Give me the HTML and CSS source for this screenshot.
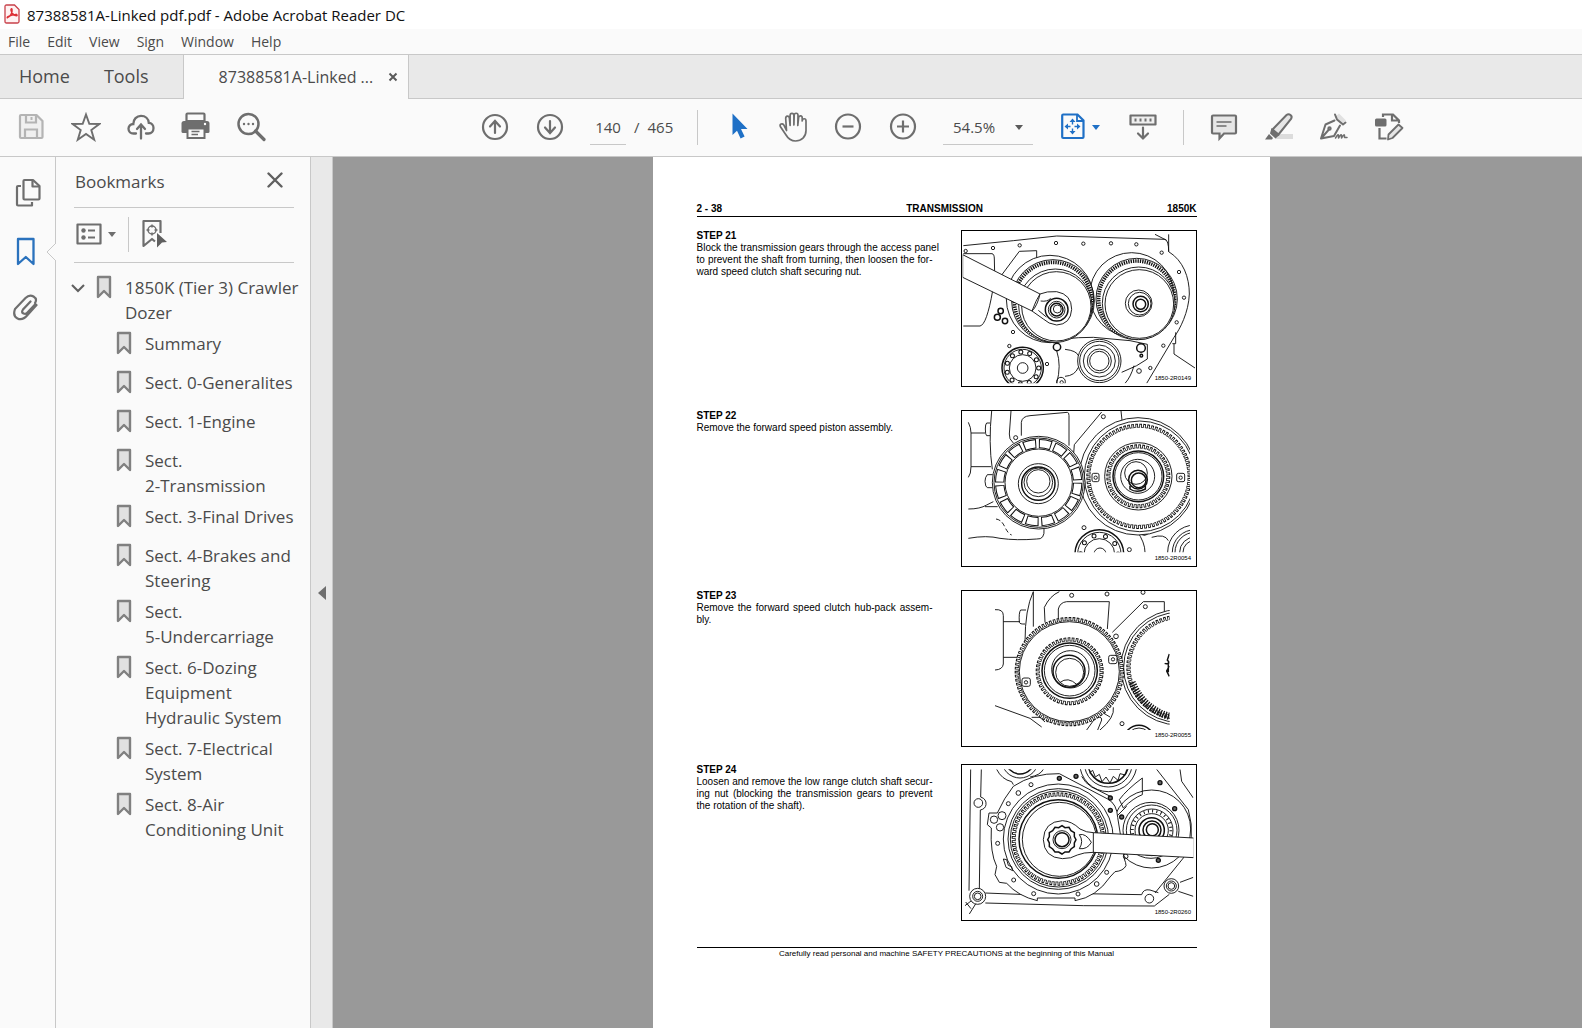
FILE: index.html
```html
<!DOCTYPE html>
<html lang="en">
<head>
<meta charset="utf-8">
<title>87388581A-Linked pdf.pdf - Adobe Acrobat Reader DC</title>
<link rel="stylesheet" href="styles.css">
</head>
<body>
<svg class="defs" aria-hidden="true">
  <symbol id="bm" viewBox="0 0 16 25"><path d="M2 2h12v20l-6-6-6 6z" fill="#e1e1e1" stroke="#808080" stroke-width="2.4" stroke-linejoin="round"/></symbol>
</svg>
<header>
  <div class="titlebar">
    <svg class="app-icon" viewBox="0 0 16 20"><path d="M1 2.500q0-1.500 1.500-1.500h8l4.500 4.500v12q0 1.500-1.500 1.500h-11q-1.500 0-1.500-1.500z" fill="#fff2f2" stroke="#c8404a" stroke-width="1.300"/><path d="M3.500 13.500c3-1 5-5 4.500-8-.2-1.300-1.200-.8-1 .6.500 3 3 5.500 5.500 5.600 1.200-.3.300-1.500-1-1.300-2.600 0-5 .9-7.500 2.200-.9.600-.9 1.500-.5.900z" fill="none" stroke="#dd2f35" stroke-width="1.500"/></svg>
    <span>87388581A-Linked pdf.pdf - Adobe Acrobat Reader DC</span>
  </div>
  <nav class="menubar" aria-label="Menu">
    <button>File</button><button>Edit</button><button>View</button><button>Sign</button><button>Window</button><button>Help</button>
  </nav>
  <div class="tabbar">
    <button class="tab">Home</button>
    <button class="tab">Tools</button>
    <div class="doc-tab">
      <button class="doc-name">87388581A-Linked ...</button>
      <button class="close-tab" aria-label="Close tab"><svg viewBox="0 0 10 10"><path d="M1.500 1.500l7 7m0-7l-7 7" stroke="#5a5a5a" stroke-width="2"/></svg></button>
    </div>
  </div>
  <div class="toolbar" role="toolbar" aria-label="Document tools">
    <button class="tool" aria-label="Save"><svg viewBox="0 0 30 30"><g fill="none" stroke="#b4b4b4" stroke-width="2.200"><path d="M4 4q0-1 1-1h15.500l6 6v16q0 1-1 1h-20.500q-1 0-1-1z" fill="#f0f0f0" stroke-linejoin="round"/><path d="M10 3v7.500h10v-7.500M9 26v-8.500h12v8.500" /><path d="M15.500 5v3" stroke-width="2"/></g></svg></button>
    <button class="tool" aria-label="Add to favourites"><svg viewBox="0 0 30 30"><path d="M15 2.500l3.300 9.300 10 .2-8 6.100 2.900 9.600-8.200-5.800-8.200 5.800 2.900-9.600-8-6.100 10-.2z" fill="none" stroke="#6e6e6e" stroke-width="1.900"/></svg></button>
    <button class="tool" aria-label="Upload"><svg viewBox="0 0 30 30"><g fill="none" stroke="#6e6e6e" stroke-width="2.300" stroke-linecap="round"><path d="M10 21.500H7.500c-3 0-5-2.200-5-4.800 0-2.700 2-4.700 4.800-4.700 0-4.800 3.400-8.200 7.700-8.200 4.400 0 7.500 3 7.800 7 2.900.2 4.700 2.500 4.700 5.200 0 3-2 5.500-5 5.500H20"/><path d="M15 26.500v-14m-4 4.500l4-4.500 4 4.500"/></g></svg></button>
    <button class="tool" aria-label="Print"><svg viewBox="0 0 30 30"><path d="M5.500 2.500q0-1 1-1h16q1 0 1 1v6.500h-18z" fill="#fafafa" stroke="#6e6e6e" stroke-width="2.200"/><path d="M3 9h23q2.500 0 2.500 2.500v8q0 1.500-1.500 1.500h-25q-1.500 0-1.500-1.500v-8q0-2.500 2.500-2.500z" fill="#6e6e6e"/><circle cx="24" cy="12" r="1.200" fill="#fff"/><path d="M6.500 16.500h17v9.500h-17z" fill="#fafafa" stroke="#6e6e6e" stroke-width="2"/><path d="M10.500 19.500h8m-8 3h6.500" stroke="#6e6e6e" stroke-width="1.400"/></svg></button>
    <button class="tool" aria-label="Find"><svg viewBox="0 0 30 30"><g fill="none" stroke="#6e6e6e"><circle cx="12.500" cy="12" r="10" stroke-width="2.500"/><path d="M19.500 19l8.500 8.500" stroke-width="3.200" stroke-linecap="round"/></g><g fill="#6e6e6e"><circle cx="8" cy="12" r="1.200"/><circle cx="12.500" cy="12" r="1.200"/><circle cx="17" cy="12" r="1.200"/></g></svg></button>

    <div class="pager">
      <button class="tool" aria-label="Previous page"><svg viewBox="0 0 30 30"><g fill="none" stroke="#6e6e6e" stroke-width="2.200" stroke-linecap="round"><circle cx="15" cy="15" r="12"/><path d="M15 21v-12m-5 5.500l5-5.500 5 5.500"/></g></svg></button>
      <button class="tool" aria-label="Next page"><svg viewBox="0 0 30 30"><g fill="none" stroke="#6e6e6e" stroke-width="2.200" stroke-linecap="round"><circle cx="15" cy="15" r="12"/><path d="M15 9v12m-5-5.500l5 5.500 5-5.500"/></g></svg></button>
      <div class="page-count"><input type="text" value="140" aria-label="Page number"><span>/</span><span>465</span></div>
    </div>
    <span class="divider"></span>
    <button class="tool" aria-label="Select"><svg viewBox="0 0 30 30"><path d="M9.500 1.500l15 15.500h-6.500l3.600 7.500-4 2-3.600-7.800-4.500 4.300z" fill="#1f70c6"/></svg></button>
    <button class="tool" aria-label="Hand"><svg viewBox="0 0 30 30"><path d="M8.500 18.500L7.700 6.500c-.1-3 3.300-3.200 3.700-.3l.7 7.300V3.500c0-2.900 3.700-2.900 3.800 0v9.500l.3-9.700c.2-2.800 3.800-2.700 3.800.2l-.2 10 .8-7.800c.4-2.600 3.700-2.300 3.600.4v2.900c.3-3 3.800-3 3.800 0v9.500c0 6.500-4.500 10.500-10.500 10.500-5 0-7.500-2.500-9.800-6.500L2.300 14.500c-.9-2.500 2-3.600 3.500-1.600z" fill="none" stroke="#6e6e6e" stroke-width="1.700" stroke-linejoin="round"/></svg></button>
    <button class="tool" aria-label="Zoom out"><svg viewBox="0 0 30 30"><g fill="none" stroke="#6e6e6e" stroke-width="2.200"><circle cx="15" cy="14.500" r="12"/><path d="M9.500 14.500h11"/></g></svg></button>
    <button class="tool" aria-label="Zoom in"><svg viewBox="0 0 30 30"><g fill="none" stroke="#6e6e6e" stroke-width="2.200"><circle cx="15" cy="14.500" r="12"/><path d="M9 14.500h12m-6-6v12"/></g></svg></button>
    <div class="zoom"><select aria-label="Zoom level"><option>54.5%</option></select><svg class="caret" viewBox="0 0 8 5"><path d="M0 0h8l-4 5z" fill="#5a5a5a"/></svg></div>
    <button class="tool fit" aria-label="Fit page"><svg viewBox="0 0 30 30"><g fill="none" stroke="#1f70c6" stroke-width="2.200"><path d="M4.200 3.500q0-1 1-1h14.300l6 6v16.500q0 1-1 1h-19.300q-1 0-1-1z"/><path d="M19 2.500v6.500h6.500" stroke-width="1.800"/><path d="M14.500 9v3.500m0 4v3.500m-5.500-5.500h3.500m4 0h3.500" stroke-width="1.400"/></g><path d="M14.500 6.500l3 3.500h-6zm0 16l3-3.500h-6zm-8-8l3.500-3v6zm16 0l-3.500-3v6z" fill="#1f70c6"/></svg><svg class="caret" viewBox="0 0 8 5"><path d="M0 0h8l-4 5z" fill="#1f70c6"/></svg></button>
    <button class="tool" aria-label="Read mode"><svg viewBox="0 0 30 30"><g fill="none" stroke="#6e6e6e" stroke-width="2.200"><path d="M2.500 3.500h25v9h-25z" fill="#eee" stroke-linejoin="round"/><path d="M15 15.500v11m-5-5l5 5 5-5" stroke-linecap="round"/><path d="M6.500 8h18" stroke-dasharray="2 3" stroke-width="3"/></g></svg></button>
    <span class="divider"></span>
    <button class="tool" aria-label="Comment"><svg viewBox="0 0 30 30"><path d="M4 3.500h22q1 0 1 1v16q0 1-1 1h-11l-4.500 5v-5h-6.500q-1 0-1-1v-16q0-1 1-1z" fill="#e6e6e6" stroke="#6e6e6e" stroke-width="2.200"/><path d="M7.500 10h15m-15 4h10" stroke="#6e6e6e" stroke-width="1.500"/></svg></button>
    <button class="tool" aria-label="Highlight"><svg viewBox="0 0 30 30"><path d="M11 27l5-5h13v5z" fill="#dcdcdc"/><path d="M8.500 17.500L22.500 3q2-1.500 4 0t.5 4L14.500 22.500z" fill="#e6e6e6" stroke="#6e6e6e" stroke-width="2"/><path d="M7.500 16l8 7-4 3.500-5.500-5zM5 22l4 4-1 1.500h-7z" fill="#6e6e6e"/></svg></button>
    <button class="tool" aria-label="Sign"><svg viewBox="0 0 30 30"><g fill="none" stroke="#6e6e6e" stroke-width="2" stroke-linecap="round" stroke-linejoin="round"><path d="M16 5l4-3.500 7 7-4 3z" fill="#e1e1e1" stroke="none"/><path d="M16 2.500l2 5 6 5 2.500-2M15.500 8.500l-9 4-4.500 14 13-2.500 6-10.500M2.500 26l7-8"/><circle cx="10.500" cy="16.500" r="1.200"/><path d="M16.500 26q3-5 3-2.500v2.500q3-5 3-2.500v2.500q3-5 3-2v1.500h2.500" stroke-width="1.500"/></g></svg></button>
    <button class="tool" aria-label="Fill and sign"><svg viewBox="0 0 30 30"><g fill="none" stroke="#6e6e6e" stroke-width="2.200"><path d="M9 5v-2.500h10l6 6v2.500M5.500 16v10.500h7M18 3v5.500h6.500"/><path d="M14.500 22.500l10-10 4 3.500-10 10-4.500 1.500z" fill="#e6e6e6" stroke-width="1.800" stroke-linejoin="round"/></g><rect x="1" y="6.500" width="11.500" height="8" rx="1.500" fill="#6e6e6e"/></svg></button>
  </div>
</header>

<main class="workspace">
  <nav class="rail" aria-label="Panels">
    <button class="pages" aria-label="Page thumbnails"><svg viewBox="0 0 26 30"><g fill="none" stroke="#6e6e6e" stroke-width="2.200" stroke-linejoin="round"><path d="M6 8H3q-1 0-1 1v17.500q0 1 1 1h14v-3.500" fill="#fafafa"/><path d="M8.500 3q0-1 1-1h8.500l6.500 6v12.500q0 1-1 1h-14q-1 0-1-1z"/><path d="M17.500 2v6.500h7"/></g></svg></button>
    <button class="active" aria-label="Bookmarks"><svg viewBox="0 0 26 30"><path d="M5 3h15.500v25l-7.700-7-7.800 7z" fill="none" stroke="#2a72bd" stroke-width="2.300" stroke-linejoin="round"/></svg></button>
    <button aria-label="Attachments"><svg viewBox="0 0 26 30"><path d="M17.500 7.500l-7.500 8q-2 3 .5 4t4-1l8-8.500M23.500 11l-9 10q-5 6-10 3.500t-2.500-9.500l10.500-11q4-4 8-1.500t1.500 6.500" fill="none" stroke="#6e6e6e" stroke-width="2.200" stroke-linecap="round"/></svg></button>
    <svg class="notch" viewBox="0 0 10 18"><path d="M10 0L1 9l9 9" fill="#fafafa" stroke="#c8c8c8"/></svg>
  </nav>
  <aside class="panel">
    <div class="panel-head"><h2>Bookmarks</h2><button aria-label="Close panel"><svg viewBox="0 0 16 16"><path d="M1.500 1.500l13 13m0-13l-13 13" stroke="#606060" stroke-width="2.400" stroke-linecap="round"/></svg></button></div>
    <div class="panel-tools">
      <button class="options" aria-label="Options"><svg class="list" viewBox="0 0 26 22"><path d="M1.500 1.500h23v19h-23z" fill="none" stroke="#6e6e6e" stroke-width="2.200" stroke-linejoin="round"/><circle cx="7.500" cy="7.500" r="2.200" fill="#6e6e6e"/><circle cx="7.500" cy="14.500" r="2.200" fill="#6e6e6e"/><path d="M12 7.500h7m-7 7h7" stroke="#6e6e6e" stroke-width="2"/></svg><svg class="caret" viewBox="0 0 8 5"><path d="M0 0h8l-4 5z" fill="#6e6e6e"/></svg></button>
      <span class="divider"></span>
      <button aria-label="Find current bookmark"><svg class="find" viewBox="0 0 26 30"><g fill="none" stroke="#6e6e6e"><path d="M19.500 14V2h-17v25l8.500-7 3 2.500" stroke-width="2.200" stroke-linejoin="round"/><circle cx="11" cy="11" r="4" stroke-width="1.500"/><path d="M11 5.500v3m0 5v3m-5.500-5.500h3m5 0h3" stroke-width="1.500"/></g><path d="M16 14l10 9-5 .5-5 5z" fill="#5f5f5f"/></svg></button>
    </div>
    <div class="tree">
      <div class="node root"><button aria-label="Collapse"><svg class="chevron" viewBox="0 0 16 10"><path d="M2 2l6 6 6-6" fill="none" stroke="#606060" stroke-width="2.100"/></svg></button><svg class="bm"><use href="#bm"/></svg><a href="#page">1850K (Tier 3) Crawler<br>Dozer</a></div>
      <ul>
        <li class="node"><svg class="bm"><use href="#bm"/></svg><a href="#page">Summary</a></li>
        <li class="node"><svg class="bm"><use href="#bm"/></svg><a href="#page">Sect. 0-Generalites</a></li>
        <li class="node"><svg class="bm"><use href="#bm"/></svg><a href="#page">Sect. 1-Engine</a></li>
        <li class="node"><svg class="bm"><use href="#bm"/></svg><a href="#page">Sect.<br>2-Transmission</a></li>
        <li class="node"><svg class="bm"><use href="#bm"/></svg><a href="#page">Sect. 3-Final Drives</a></li>
        <li class="node"><svg class="bm"><use href="#bm"/></svg><a href="#page">Sect. 4-Brakes and<br>Steering</a></li>
        <li class="node"><svg class="bm"><use href="#bm"/></svg><a href="#page">Sect.<br>5-Undercarriage</a></li>
        <li class="node"><svg class="bm"><use href="#bm"/></svg><a href="#page">Sect. 6-Dozing<br>Equipment<br>Hydraulic System</a></li>
        <li class="node"><svg class="bm"><use href="#bm"/></svg><a href="#page">Sect. 7-Electrical<br>System</a></li>
        <li class="node"><svg class="bm"><use href="#bm"/></svg><a href="#page">Sect. 8-Air<br>Conditioning Unit</a></li>
      </ul>
    </div>
  </aside>
  <button class="splitter" aria-label="Collapse panel"><svg viewBox="0 0 8 14"><path d="M8 0v14l-8-7z" fill="#6e6e6e"/></svg></button>
  <section class="viewer">
    <article class="page" id="page">
      <header class="page-head"><span>2 - 38</span><span>TRANSMISSION</span><span>1850K</span></header>

      <section class="step">
        <div class="copy"><h3>STEP 21</h3><p><span class="full">Block the transmission gears through the access panel</span><span class="full">to prevent the shaft from turning, then loosen the for-</span><span>ward speed clutch shaft securing nut.</span></p></div>
        <svg class="figure" viewBox="36 26 702 465" role="img" aria-label="Loosening the forward clutch shaft nut">
          <clipPath id="c1"><rect x="38" y="34" width="698" height="449"/></clipPath>
          <g class="ink" clip-path="url(#c1)">
            <path d="M40 70L190 55 320 41 645 51Q656 55 656 88M615 36l35 18M656 36v52C700 115 718 165 718 215 716 270 690 320 672 345L590 483"/>
            <path d="M40 94h86q7 1 7 16l1 44M128 205Q110 308 90 311H40M155 158l53-71 52-2v24"/>
            <g><circle cx="47" cy="86" r="5"/><circle cx="129" cy="77" r="5"/><circle cx="209" cy="69" r="5"/><circle cx="318" cy="62" r="5"/><circle cx="400" cy="64" r="5"/><circle cx="483" cy="63" r="5"/><circle cx="559" cy="66" r="5"/><circle cx="635" cy="91" r="5"/><circle cx="687" cy="149" r="5"/><circle cx="702" cy="226" r="5"/><circle cx="680" cy="300" r="5"/><circle cx="640" cy="370" r="5"/><circle cx="601" cy="437" r="5"/><circle cx="189" cy="329" r="5"/><circle cx="178" cy="371" r="5"/><circle cx="291" cy="425" r="5"/></g>
            <path d="M310 362q20-17 120-17l110 10 52 11v44l-32 20-45 20M345 381q35 4 40 19M385 435q-10 25-40 27M320 385q15 45 0 98M677 330v34h-10M672 365v30l63 42M552 430q-10 35-27 53"/>
            <circle class="paper" cx="545" cy="217" r="126"/><circle cx="560" cy="230" r="122"/><circle class="rim" cx="560" cy="230" r="114"/><circle class="paper" cx="566" cy="243" r="109"/><circle cx="568" cy="245" r="103"/>
            <circle cx="566" cy="243" r="40"/><circle cx="569" cy="244" r="34"/><circle class="heavy" cx="572" cy="245" r="23"/><circle class="heavy" cx="572" cy="246" r="15"/>
            <circle class="paper" cx="300" cy="230" r="131"/><circle cx="309" cy="236" r="124"/><circle class="rim" cx="309" cy="236" r="116"/><circle class="paper" cx="316" cy="250" r="110"/><circle cx="319" cy="252" r="104"/>
            <path class="paper" d="M38 97L270 215q-12 18-24 51L38 165z"/>
            <path class="paper" d="M270 215q20-9 50-7 45 8 45 53-3 45-45 47-25-3-40-18l-34-24q16-15 24-51z"/><path d="M272 236q20 3 30-8M265 264l24 20"/>
            <circle class="heavy" cx="320" cy="262" r="34"/><circle cx="320" cy="262" r="25"/><circle class="heavy" cx="320" cy="262" r="19"/><circle cx="322" cy="260" r="12"/>
            <circle cx="448" cy="416" r="65"/><circle cx="448" cy="416" r="59"/><circle cx="448" cy="416" r="48"/><circle cx="448" cy="416" r="36"/><circle cx="448" cy="416" r="29"/>
            <circle class="heavy" cx="218" cy="437" r="62"/><circle cx="218" cy="437" r="56"/><circle class="balls" cx="218" cy="437" r="48" pathLength="220"/><circle class="ball-holes" cx="218" cy="437" r="48" pathLength="220"/><circle cx="218" cy="437" r="40"/><circle cx="218" cy="437" r="16"/>
            <circle class="heavy" cx="321" cy="374" r="11"/><circle class="heavy" cx="573" cy="377" r="13"/><circle class="heavy" cx="574" cy="400" r="4"/><circle cx="567" cy="446" r="7"/><circle cx="333" cy="478" r="13"/><circle cx="335" cy="480" r="5"/>
            <circle class="heavy" cx="152" cy="266" r="8"/><circle class="heavy" cx="142" cy="285" r="9"/><circle class="heavy" cx="165" cy="296" r="8"/>
          </g>
          <text x="723" y="474">1850-2R0149</text>
        </svg>
      </section>

      <section class="step">
        <div class="copy"><h3>STEP 22</h3><p><span>Remove the forward speed piston assembly.</span></p></div>
        <svg class="figure" viewBox="36 26 702 465" role="img" aria-label="Forward speed piston">
          <clipPath id="c2"><rect x="50" y="26" width="670" height="424"/></clipPath>
          <g class="ink" clip-path="url(#c2)">
            <path d="M125 26q-10 94 2 175M55 60q8 15 8 32v101q0 22-8 32M63 92h42M63 193h60M120 62h-10q-4 3-4 18 0 18 4 20h10M128 217h-16q-7 8-7 20 1 18 7 19h16M183 26l-5 69q-2 15 12 27M214 100V60q2-18 26-20l112-10q5 0 5 10v90M370 165l3-38 82-98M513 26l3 28"/>
            <path d="M55 320q35 0 55-12l20-10M105 313h38M55 408q55-10 95 0 50 7 110 2 25 2 22-30M605 405q40-12 50 10M560 385q25 35 25 65"/><path d="M138 350q17 2 27 25 10 20 20 23" stroke-dasharray="14 7"/>
            <circle cx="197" cy="106" r="6"/><circle cx="460" cy="43" r="6"/><circle cx="402" cy="376" r="6"/><circle cx="538" cy="442" r="6"/>
            <circle class="heavy" cx="583" cy="385" r="13"/>
            <circle class="paper" cx="564" cy="222" r="176"/><circle cx="569" cy="222" r="166"/>
            <circle class="tooth" cx="567" cy="222" r="152" pathLength="960"/><circle class="tooth-gap" cx="567" cy="222" r="150" pathLength="960"/><circle class="root-line" cx="567" cy="222" r="147" pathLength="960"/>
            <circle cx="565" cy="222" r="101"/><circle class="tooth" cx="565" cy="222" r="90" pathLength="576"/><circle class="tooth-gap" cx="565" cy="222" r="88" pathLength="576"/><circle class="root-line" cx="565" cy="222" r="85" pathLength="576"/>
            <circle class="heavy" cx="565" cy="222" r="76"/><circle cx="565" cy="222" r="71"/><circle cx="563" cy="222" r="51"/><circle cx="558" cy="212" r="34"/><circle class="heavy" cx="564" cy="232" r="28"/><circle class="heavy" cx="566" cy="234" r="22"/><path class="heavy" d="M540 250v10q20 14 46 0v-12"/>
            <rect class="paper" x="426" y="213" width="21" height="25" rx="5"/><circle cx="437" cy="226" r="5"/><rect class="paper" x="680" y="213" width="24" height="25" rx="5"/><circle cx="692" cy="226" r="5"/>
            <circle class="paper" cx="266" cy="241" r="139"/><circle cx="266" cy="241" r="134"/><circle class="window" cx="266" cy="241" r="117" pathLength="720"/><circle class="window-gap" cx="266" cy="241" r="117" pathLength="720"/><circle cx="266" cy="241" r="101"/>
            <circle cx="265" cy="244" r="60"/><circle class="heavy" cx="265" cy="244" r="50"/><circle cx="265" cy="240" r="43"/><circle cx="265" cy="237" r="35"/>
            <circle class="heavy" cx="448" cy="455" r="73"/><circle cx="448" cy="455" r="65"/><circle class="balls" cx="448" cy="455" r="56" pathLength="200"/><circle class="ball-holes" cx="448" cy="455" r="56" pathLength="200"/><circle cx="448" cy="455" r="46"/><circle cx="450" cy="455" r="18"/>
            <circle cx="735" cy="450" r="82"/><circle cx="735" cy="450" r="68"/><circle cx="735" cy="450" r="60"/><circle cx="735" cy="450" r="46"/><circle cx="735" cy="450" r="36"/>
          </g>
          <text x="723" y="474">1850-2R0054</text>
        </svg>
      </section>

      <section class="step step-short">
        <div class="copy"><h3>STEP 23</h3><p><span class="full">Remove the forward speed clutch hub-pack assem-</span><span>bly.</span></p></div>
        <svg class="figure" viewBox="36 26 702 465" role="img" aria-label="Forward speed clutch hub-pack">
          <clipPath id="c3"><rect x="134" y="26" width="525" height="417"/></clipPath>
          <g class="ink" clip-path="url(#c3)">
            <path d="M135 82q25-2 25 18v145q-2 17-25 18M160 118h50M160 225h43M228 83h-16q-6 7-4 37 2 6 17 5M250 28q-25 52-25 152M250 28v105M285 120l-2-45q17-35 45-47M325 108V80q5-20 25-22h128l-6 82M487 150l93-92h63v36"/>
            <path d="M135 370l105 38 35 26M245 405h25l15 14M290 418h90M410 443l25-35q20-10 20 5l-12 30M490 375q5 30-40 68M460 392l20 12"/>
            <circle cx="365" cy="39" r="6"/><circle cx="471" cy="35" r="6"/><circle cx="579" cy="30" r="6"/><circle cx="586" cy="73" r="6"/><circle cx="498" cy="162" r="7"/><circle cx="516" cy="424" r="6"/>
            <circle class="heavy" cx="567" cy="475" r="46"/><circle cx="567" cy="475" r="38"/>
            <circle class="paper" cx="686" cy="255" r="173"/><circle cx="686" cy="255" r="165"/><circle class="tooth" cx="686" cy="255" r="151" pathLength="960"/><circle class="tooth-gap" cx="686" cy="255" r="149" pathLength="960"/><circle class="root-line" cx="686" cy="255" r="145" pathLength="960"/>
            <path d="M546 300Q580 380 658 402" stroke-width="22" stroke-dasharray="4 4"/><path class="heavy" d="M658 215l-6 18 6 8M658 243q-10 2-14 0m14 8l-8 15 8 16M655 240v30"/>
            <circle class="blank" cx="358" cy="268" r="162"/><circle class="tooth" cx="358" cy="268" r="158" pathLength="996"/><circle class="tooth-gap" cx="358" cy="268" r="156" pathLength="996"/><circle class="root-line" cx="358" cy="268" r="153" pathLength="996"/><circle cx="358" cy="268" r="150"/>
            <circle class="tooth" cx="359" cy="267" r="96" pathLength="600"/><circle class="tooth-gap" cx="359" cy="267" r="94" pathLength="600"/><circle class="root-line" cx="359" cy="267" r="91" pathLength="600"/>
            <circle class="heavy" cx="359" cy="265" r="83"/><circle cx="359" cy="265" r="76"/><circle cx="361" cy="261" r="56"/><circle class="heavy" cx="357" cy="267" r="48"/><circle cx="359" cy="270" r="42"/><path d="M329 301q25-20 52 6"/>
            <rect class="paper" x="476" y="219" width="25" height="25" rx="6"/><circle cx="489" cy="231" r="5"/><rect class="paper" x="216" y="287" width="25" height="25" rx="6"/><circle cx="228" cy="300" r="5"/>
          </g>
          <text x="723" y="465">1850-2R0055</text>
        </svg>
      </section>

      <section class="step step-last">
        <div class="copy"><h3>STEP 24</h3><p><span class="full">Loosen and remove the low range clutch shaft secur-</span><span class="full">ing nut (blocking the transmission gears to prevent</span><span>the rotation of the shaft).</span></p></div>
        <svg class="figure" viewBox="36 26 702 465" role="img" aria-label="Loosening the low range clutch shaft nut">
          <clipPath id="c4"><rect x="40" y="39" width="690" height="446"/></clipPath>
          <g class="ink" clip-path="url(#c4)">
            <path d="M62 39L57 403M94 39l-2 83q18 6 16 23-2 13-17 16l-3 239M106 410l150 6M106 440l294 8 213 1 45-35M400 412l175 3q5-18 25-14l25 8M45 448l18-14M58 473l20-32M47 437l16 20M690 378l40-15M685 405l45 15"/>
            <path d="M620 39l95 121q25 90-15 145l-85 105M690 39l5 36 35 50M508 130q22-30 69-65v50q-27 10-57 40zM140 39q15 30 45 37l5 9M240 62q30-5 40-23M395 60q10 20 30 32l60 30M500 180l30-30"/>
            <circle cx="210" cy="10" r="55"/><circle class="heavy" cx="210" cy="10" r="43"/><circle cx="475" cy="20" r="86"/><circle cx="475" cy="20" r="72"/><circle class="heavy" cx="475" cy="20" r="61"/><path d="M418 50l10-8 8 20 12-8 8 22 12-14 12 18 10-20 14 12 6-20 16 4 4-17M475 39h35"/>
            <circle cx="605" cy="218" r="117"/><circle class="paper" cx="603" cy="222" r="84"/><circle cx="605" cy="222" r="76"/><circle class="thin-rim" cx="605" cy="222" r="58"/><circle cx="605" cy="222" r="64"/><circle cx="605" cy="222" r="50"/><circle class="heavy" cx="605" cy="222" r="38"/><circle class="heavy" cx="606" cy="221" r="27"/><circle class="heavy" cx="607" cy="220" r="18"/>
            <path class="paper" d="M190 90q60-40 138-38l145 76q28 15 30 55l20 125q5 12 5 20-8 16-33 18l-15 16q-40 60-105 71v-8H262v8q-57-13-92-52l-22-3-13-23 5-25q-20-40-16-115l-12-10 5-35h25q20-45 48-80z"/>
            <circle cx="325" cy="248" r="165"/><circle cx="325" cy="248" r="151"/><circle cx="325" cy="248" r="144"/><circle class="tooth" cx="325" cy="248" r="134" pathLength="840"/><circle class="tooth-gap" cx="325" cy="248" r="132" pathLength="840"/><circle class="root-line" cx="325" cy="248" r="129" pathLength="840"/><circle class="heavy" cx="325" cy="248" r="118"/><circle cx="328" cy="249" r="111"/>
            <circle cx="243" cy="85" r="6"/><circle cx="205" cy="110" r="7"/><circle cx="175" cy="142" r="6"/><circle cx="143" cy="261" r="6"/><circle cx="191" cy="371" r="6"/><circle cx="251" cy="412" r="6"/><circle cx="384" cy="413" r="6"/><circle cx="440" cy="383" r="7"/><circle cx="470" cy="348" r="6"/><circle cx="527" cy="300" r="7"/><path d="M160 308l8 25 20 10-3-12-10-4-5-17z"/>
            <circle cx="156" cy="178" r="12"/><circle cx="132" cy="190" r="11"/><circle cx="150" cy="213" r="11"/><circle cx="85" cy="140" r="13"/><circle cx="598" cy="427" r="13"/>
            <g class="bolts"><circle cx="328" cy="66" r="6"/><circle cx="378" cy="60" r="6"/><circle cx="481" cy="125" r="6"/><circle cx="481" cy="162" r="6"/><circle cx="515" cy="182" r="6"/><circle cx="674" cy="157" r="6"/><circle cx="630" cy="79" r="6"/><circle cx="625" cy="312" r="6"/></g>
            <circle class="paper" cx="83" cy="420" r="24"/><circle cx="83" cy="420" r="15"/><circle cx="83" cy="420" r="10"/><circle class="paper" cx="664" cy="389" r="22"/><circle cx="664" cy="389" r="15"/><circle cx="664" cy="389" r="10"/>
            <path class="paper" d="M430 229l302 16v59L430 288q-30 0-48 8-18 11-45 11-55-3-57-57 2-54 57-57 28 1 53 25 20 11 40 11z"/><path d="M430 229v59M388 235q20-5 36 23-12 22-36 19 14-22 0-42z"/>
            <path class="heavy" d="M336 208l9 6 12-1 6 10 10 6v12l5 9-5 10v11l-10 7-6 9h-12l-9 6-10-6h-11l-7-9-10-7v-11l-5-10 5-9v-12l10-6 7-10 11 1z"/><circle cx="336" cy="250" r="27"/><circle class="heavy" cx="336" cy="250" r="21"/>
          </g>
          <text x="723" y="474">1850-2R0260</text>
        </svg>
      </section>

      <footer class="page-foot">Carefully read personal and machine SAFETY PRECAUTIONS at the beginning of this Manual</footer>
    </article>
  </section>
</main>
</body>
</html>
```
FILE: styles.css
```css
* { box-sizing: border-box; }
body {
  margin: 0;
  min-height: 100vh;
  display: flex;
  flex-direction: column;
  background: #fafafa;
  color: #4b4b4b;
  font-family: "Open Sans", "Noto Sans", sans-serif;
}
button { margin: 0; padding: 0; border: 0; background: none; color: inherit; font: inherit; }
svg { display: block; }
h2, h3, p, ul { margin: 0; padding: 0; font-weight: normal; }
.defs { position: absolute; width: 0; height: 0; }

/* window chrome */
.titlebar { display: flex; align-items: center; gap: 7px; height: 29px; padding: 0 0 1px 4px; background: #fff; color: #111; font-size: 15px; line-height: 24px; }
.titlebar span { padding-top: 2px; }
.app-icon { width: 16px; height: 20px; }
.menubar { display: flex; align-items: center; gap: 17px; height: 25px; padding-left: 8px; font-size: 14px; line-height: 20px; }
.tabbar { display: flex; height: 45px; padding-left: 19px; background: #e9e9e9; border: solid #c8c8c8; border-width: 1px 0; }
.tab { margin-right: 34px; padding-bottom: 2px; font-size: 18px; line-height: 24px; }
.doc-tab { display: flex; align-items: center; gap: 15px; width: 226px; margin-bottom: -1px; padding-left: 35px; background: #fafafa; border: solid #c8c8c8; border-width: 0 1px; }
.doc-name { font-size: 16px; }
.close-tab svg { width: 10px; height: 10px; }

/* toolbar */
.toolbar { display: flex; align-items: center; gap: 25px; height: 58px; padding: 0 16px 1px; border-bottom: 1px solid #c8c8c8; font-size: 15px; }
.tool { display: flex; align-items: center; flex: none; width: 30px; height: 30px; }
.tool svg { width: 30px; height: 30px; }
.pager { display: flex; align-items: center; gap: 25px; margin-left: 189px; }
.page-count { display: flex; align-items: center; width: 82px; white-space: nowrap; }
.page-count input { width: 36px; height: 36px; margin-right: 8px; padding: 0; border: 0; border-bottom: 1px solid #c8c8c8; background: none; color: inherit; font: inherit; text-align: center; }
.page-count span + span { margin-left: 8px; }
.divider { flex: none; width: 1px; height: 35px; background: #c8c8c8; }
.zoom { position: relative; flex: none; width: 90px; }
.zoom select { width: 100%; height: 36px; padding: 0 0 0 10px; border: 0; border-bottom: 1px solid #c8c8c8; border-radius: 0; background: none; color: inherit; font: inherit; appearance: none; }
.caret { width: 8px; height: 5px; }
.zoom .caret { position: absolute; right: 10px; top: 16px; }
.fit { width: 45px; gap: 4px; }
.fit .caret { width: 8px; height: 5px; }

/* side panels */
.workspace { display: flex; flex: 1; }
.rail { position: relative; flex: none; width: 56px; padding: 21px 0 0 13px; border-right: 1px solid #c8c8c8; }
.rail button { display: block; margin-bottom: 28px; }
.rail svg { width: 26px; height: 30px; }
.rail .pages { padding-left: 2px; }
.rail .notch { position: absolute; right: -1px; top: 86px; width: 10px; height: 18px; }
.panel { flex: none; width: 255px; padding: 0 0 0 16px; border-right: 1px solid #c8c8c8; font-size: 17px; line-height: 25px; }
.panel-head { display: flex; align-items: center; justify-content: space-between; margin: 0 16px 0 2px; height: 51px; padding: 0 11px 2px 1px; border-bottom: 1px solid #c8c8c8; }
.panel-head h2 { font-size: 17px; }
.panel-head button { padding-bottom: 2px; }
.panel-head svg { width: 16px; height: 16px; }
.panel-tools { display: flex; align-items: center; gap: 12px; height: 55px; margin: 0 16px 0 2px; padding: 0 0 2px 2px; border-bottom: 1px solid #c8c8c8; }
.options { display: flex; align-items: center; gap: 6px; }
.list { width: 26px; height: 22px; }
.find { width: 26px; height: 30px; }
.tree { padding-top: 12px; }
.tree ul { list-style: none; padding-left: 44px; }
.tree a { color: inherit; text-decoration: none; white-space: nowrap; }
.node { display: flex; min-height: 39px; padding-bottom: 6px; gap: 13px; }
.root { gap: 10px; }
.root a { padding-left: 3px; }
.bm { flex: none; width: 16px; height: 25px; }
.root button { display: flex; align-items: center; height: 25px; margin-left: -2px; }
.chevron { width: 16px; height: 10px; }
.splitter { display: flex; align-items: center; justify-content: center; flex: none; width: 22px; background: #e9e9e9; border-right: 1px solid #c8c8c8; }
.splitter svg { width: 8px; height: 14px; }

/* document */
.viewer { flex: 1; display: flex; justify-content: center; padding-left: 7px; background: #999; }
.page { width: 617px; padding: 46px 73px 40px 44px; background: #fff; color: #000; font: 10px/12px "Liberation Sans", Arial, sans-serif; }
.page-head { display: flex; justify-content: space-between; height: 14px; border-bottom: 1px solid #000; font-weight: bold; }
.step { display: grid; grid-template-columns: minmax(0, 1fr) 236px; column-gap: 28px; align-items: start; padding-bottom: 23px; }
.page-head + .step { margin-top: 13px; }
.step-short { padding-bottom: 17px; }
.step-last { padding-bottom: 26px; }
.copy h3 { font-size: 10px; line-height: 12px; font-weight: bold; }
.copy span { display: block; white-space: nowrap; }
.copy .full { text-align-last: justify; }
.page-foot { border-top: 1px solid #000; font-size: 8px; text-align: center; }

/* line drawings */
.figure { width: 100%; height: auto; border: 1px solid #000; }
.ink { fill: none; stroke: #111; stroke-width: 2.8; }
.paper { fill: #fff; }
.blank { fill: #fff; stroke: none; }
.heavy { stroke-width: 4.5; }
.rim { stroke-width: 11; stroke-dasharray: 4 3; }
.thin-rim { stroke-width: 9; stroke-dasharray: 3 10; }
.balls { stroke-width: 15; stroke-linecap: round; stroke-dasharray: 0 20; }
.ball-holes { stroke: #fff; stroke-width: 9; stroke-linecap: round; stroke-dasharray: 0 20; }
.tooth { stroke-width: 12; stroke-dasharray: 8 4; }
.tooth-gap { stroke: #fff; stroke-width: 10; stroke-dasharray: 3 9; stroke-dashoffset: -2.5; }
.root-line { stroke-dasharray: 0 7 5 0; }
.window { stroke-width: 28; stroke-dasharray: 37 8; }
.window-gap { stroke: #fff; stroke-width: 22; stroke-dasharray: 31 14; stroke-dashoffset: -3; }
.bolts { fill: #666; stroke-width: 4; }
.figure text { font-size: 18px; text-anchor: end; }
```
